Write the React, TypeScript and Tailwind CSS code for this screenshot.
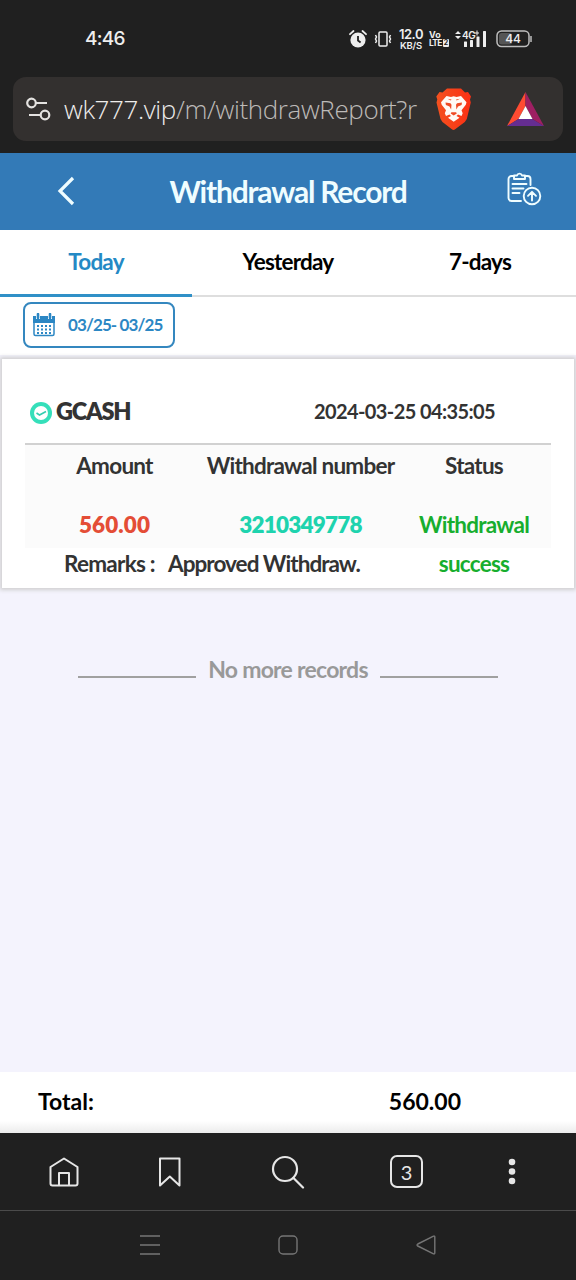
import type { ReactNode } from 'react';

/* ------------------------------------------------------------------ */
/*  Data                                                               */
/* ------------------------------------------------------------------ */

const tabs = ['Today', 'Yesterday', '7-days'];

const record = {
  method: 'GCASH',
  time: '2024-03-25 04:35:05',
  amount: '560.00',
  number: '3210349778',
  status: 'Withdrawal success',
  remarks: 'Approved Withdraw.',
};

/* ------------------------------------------------------------------ */
/*  Phone status bar                                                   */
/* ------------------------------------------------------------------ */

function StatusBar() {
  return (
    <div className="flex h-[77px] shrink-0 justify-between pl-[85px] pr-[44px] font-['Inter'] text-[#eeeeee]">
      <span className="mt-[25px] text-[19px] font-medium leading-[28px] tracking-[-0.7px]">4:46</span>
      <div className="flex h-[77px] items-center">
        <svg className="mr-[7px] h-[20px] w-[18px]" viewBox="0 0 18 20" fill="none" stroke="#eeeeee" strokeWidth="1.8">
          <circle cx="9" cy="11" r="7.6" fill="#eeeeee" stroke="none" />
          <path d="M1 5.2 4.5 2M17 5.2 13.5 2" strokeLinecap="round" />
          <path d="M9 7v4.5l2.6 2" stroke="#202020" />
        </svg>
        <svg className="mr-[6px] h-[18px] w-[18px]" viewBox="0 0 18 18" fill="none" stroke="#eeeeee" strokeWidth="1.5">
          <rect x="5" y="2" width="8" height="14" rx="1" />
          <path d="M1.500 5 2.500 7l-1 2 1 2-1 2M16.500 5l-1 2 1 2-1 2 1 2" />
        </svg>
        <div className="mr-[5px] w-[26px] text-center font-semibold">
          <div className="whitespace-nowrap text-[13px] leading-[13px] tracking-[-0.5px]">12.0</div>
          <div className="whitespace-nowrap text-[9.5px] leading-[9px] tracking-[-0.2px]">KB/S</div>
        </div>
        <div className="w-[25px] font-bold">
          <div className="text-[9px] leading-[9px]">Vo</div>
          <div className="flex items-center text-[8.5px] leading-[9px] tracking-[-0.7px]">
            LTE
            <span className="ml-[1px] rounded-[1px] bg-[#eeeeee] px-[1px] text-[7px] leading-[8px] tracking-normal text-[#202020]">2</span>
          </div>
        </div>
        <svg className="mr-[8px] h-[20px] w-[34px]" viewBox="0 0 34 20" fill="#eeeeee">
          <path d="m1 5 3-3 3 3zM1 7h6l-3 3z" />
          <text x="8" y="9.500" fontFamily="Inter" fontSize="10" fontWeight="600" letterSpacing="-0.500">4G</text>
          <path d="M21 3.500h1.500v-2h1v2H25v1h-1.500v2h-1v-2H21z" />
          <rect x="10" y="12.500" width="3" height="5.500" rx="0.500" />
          <rect x="16" y="11" width="3" height="7" rx="0.500" />
          <rect x="22.500" y="7.500" width="3" height="10.500" rx="0.500" />
          <rect x="29" y="2" width="3" height="16" rx="0.500" />
        </svg>
        <svg className="h-[18px] w-[36px]" viewBox="0 0 36 18">
          <rect x="1" y="1" width="32" height="15.500" rx="4.500" fill="none" stroke="#bdbdbd" strokeWidth="1.500" />
          <rect x="3" y="3" width="13" height="11.500" rx="2.500" fill="#555555" />
          <path d="M35 6v6" stroke="#bdbdbd" strokeWidth="1.500" />
          <text x="17" y="13.200" fontFamily="Inter" fontSize="12" fontWeight="500" textAnchor="middle" fill="#eeeeee">44</text>
        </svg>
      </div>
    </div>
  );
}

/* ------------------------------------------------------------------ */
/*  Browser address bar                                                */
/* ------------------------------------------------------------------ */

function LionShield() {
  return (
    <svg className="ml-[11px] h-[42px] w-[36px]" viewBox="0 0 36 42">
      <defs>
        <linearGradient id="shield" x1="0" x2="1">
          <stop offset="0" stopColor="#f4511f" />
          <stop offset="1" stopColor="#fb3014" />
        </linearGradient>
      </defs>
      <path d="M11 .5h14l4 4 3-.5 3 4.500-1 3 .8 3-4 16.500-2 3-10 7.500-1.300.5-1.300-.5-9.700-7.500-2-3L.5 14.500l.8-3-1-3L3.500 4l3 .5z" fill="url(#shield)" />
      <path d="m10.500 8 4.500 1 2.700-.7 2.800.7 4.500-1 5.500 6.300-.7 2.500-4.300 5.500 1.200 3-1.200 2.700-3.500-1.500-1.500 1.500 3 1.800-5.800 4-5.700-4 3-1.800-1.500-1.500L10 28l-1.200-2.700 1.200-3-4.300-5.500-.7-2.500z" fill="#fffaf5" />
      <path d="m9.500 14.500 5 .7 1 1.500-.4 4.800-1.600-3-3.600-1.500zM26 14.500l-5 .7-1 1.500.4 4.800 1.600-3 3.600-1.500zM17.700 27.500l-3-2 .7-1.300h4.700l.7 1.300zM11.500 10.800l4 .7-.6 1zM24 10.800l-4 .7.6 1z" fill="#ee4b25" />
    </svg>
  );
}

function AddressBar() {
  return (
    <div className="h-[76px] shrink-0 px-[13px]">
      <div className="flex h-[64px] items-center rounded-[13px] bg-[#33302f] pl-[13px] pr-[19px]">
        <svg className="h-[26px] w-[26px]" viewBox="0 0 26 26" fill="none" stroke="#e4e2e0" strokeWidth="2.200">
          <circle cx="5.500" cy="7" r="4.300" />
          <path d="M10 7h11M3 19h11" />
          <circle cx="19" cy="19" r="4.300" />
        </svg>
        <span className="ml-[12px] w-[361px] whitespace-nowrap font-['Open_Sans'] text-[26px] font-light leading-[32px] tracking-[-0.38px] text-[#bdbab8]">
          <span className="text-[#eeeceb]">wk777.vip</span>/m/withdrawReport?r
        </span>
        <LionShield />
        <svg className="ml-auto h-[34px] w-[37px]" viewBox="0 0 37 34">
          <path d="M18.500 0 0 34l11.500-7 7-13z" fill="#ff4b32" />
          <path d="M0 34h37l-11.500-7h-14z" fill="#652d91" />
          <path d="M18.500 0v14l7 13L37 34z" fill="#9e1f63" />
          <path d="m18.500 14-7 13h14z" fill="#ffffff" />
        </svg>
      </div>
    </div>
  );
}

/* ------------------------------------------------------------------ */
/*  Page header, tabs and date filter                                  */
/* ------------------------------------------------------------------ */

function Header() {
  return (
    <header className="flex h-[77px] shrink-0 items-center bg-[#337ab7] pl-[57px] pr-[34px] text-[#effdff]">
      <svg className="mb-[2px] h-[30px] w-[18px]" viewBox="0 0 18 30" fill="none" stroke="currentColor" strokeWidth="3.200">
        <path d="M16 2 3 15l13 13" />
      </svg>
      <h1 className="flex-1 whitespace-nowrap pb-[2px] pr-[5px] text-center text-[30px] font-bold leading-[40px] tracking-[-1.2px]">Withdrawal Record</h1>
      <svg className="mb-[6px] h-[36px] w-[36px]" viewBox="0 0 36 36" fill="none" stroke="currentColor" strokeWidth="1.900" strokeLinecap="round" strokeLinejoin="round">
        <path d="M8 5H5.500a3 3 0 0 0-3 3v19a3 3 0 0 0 3 3H15M19 5h2.500a3 3 0 0 1 3 3v6" />
        <path d="M8 8V4.500h3a2.600 2.600 0 0 1 5 0h3V8zM6.500 13h14M6.500 17.500h11M6.500 22h7" />
        <circle cx="26" cy="25" r="8.300" />
        <path d="M26 29.500V21m-4 3.800 4-4 4 4" />
      </svg>
    </header>
  );
}

function Tabs() {
  return (
    <div className="flex h-[67px] shrink-0 bg-white">
      {tabs.map((tab, i) => (
        <div
          key={tab}
          className={
            i === 0
              ? 'flex flex-1 justify-center border-b-[3px] border-[#3090c7] pt-[17px] text-[22.5px] font-bold leading-[30px] tracking-[-0.8px] text-[#2489c5]'
              : 'flex flex-1 justify-center border-b-2 border-[#dedede] pt-[17px] text-[22.5px] font-bold leading-[30px] tracking-[-0.8px] text-black'
          }
        >
          {tab}
        </div>
      ))}
    </div>
  );
}

function DateFilter() {
  return (
    <div className="h-[58px] shrink-0 bg-white pl-[23px] pt-[5px]">
      <div className="flex h-[46px] w-[152px] items-center rounded-[8px] border-2 border-[#3487bf] pl-[8px] text-[#2c87c4]">
        <svg className="h-[24px] w-[22px]" viewBox="0 0 22 24" fill="none" stroke="currentColor">
          <path d="M1 9v12a1.500 1.500 0 0 0 1.500 1.500h17A1.500 1.500 0 0 0 21 21V9" strokeWidth="1.500" />
          <path d="M0 3h3v3h4V3h8v3h4V3h3v7H0z" fill="currentColor" stroke="none" />
          <path d="M5 1v4M17 1v4" strokeWidth="2.600" strokeLinecap="round" />
          <path d="M4 13h14M4 16.500h14M4 20h14" strokeWidth="2" strokeDasharray="2 2" />
        </svg>
        <span className="ml-[13px] whitespace-nowrap text-[17px] font-bold leading-[24px] tracking-[-0.9px]">03/25- 03/25</span>
      </div>
    </div>
  );
}

/* ------------------------------------------------------------------ */
/*  Record card                                                        */
/* ------------------------------------------------------------------ */

function Column({ label, className, children }: { label: string; className: string; children: ReactNode }) {
  return (
    <div className={`flex flex-col items-center pt-px ${className}`}>
      <span className="h-[39px] whitespace-nowrap">{label}</span>
      {children}
    </div>
  );
}

function RecordCard() {
  return (
    <section className="mx-[2px] mt-[4px] h-[229px] shrink-0 bg-white px-[23px] text-[22.5px] font-bold leading-[39px] tracking-[-0.75px] text-[#333333] shadow-[0_0_4px_2px_#cfcfcf]">
      <div className="flex h-[86px] items-center border-b-2 border-[#d1d1d1] pl-[4px] pr-[56px] pt-[20px]">
        <svg className="mt-[3px] h-[24px] w-[24px]" viewBox="0 0 24 24">
          <circle cx="12" cy="12" r="11" fill="#35dfba" />
          <circle cx="12" cy="12" r="7" fill="#ffffff" />
          <path d="m7.500 12 3 2 6.500-3.500" fill="none" stroke="#35cdb0" strokeWidth="1.600" />
        </svg>
        <span className="ml-[3px] text-[23.5px] font-extrabold tracking-[-1.2px]">{record.method}</span>
        <span className="ml-auto whitespace-nowrap pt-px text-[20px] tracking-[-0.6px]">{record.time}</span>
      </div>
      <div className="flex h-[103px] bg-[#fbfbfb]">
        <Column label="Amount" className="w-[179px]">
          <span className="mt-[20px] text-[22.5px] font-extrabold tracking-[0.1px] text-[#e44d36]">{record.amount}</span>
        </Column>
        <Column label="Withdrawal number" className="w-[193px]">
          <span className="mt-[20px] text-[22.5px] font-extrabold tracking-[-0.8px] text-[#1ed3ae]">{record.number}</span>
        </Column>
        <Column label="Status" className="w-[154px]">
          <span className="mt-[20px] w-[120px] text-center text-[#17ae2e]">{record.status}</span>
        </Column>
      </div>
      <div className="flex h-[30px] w-[370px] items-center pl-[39px]">
        <span className="w-[104px] whitespace-nowrap">Remarks :</span>
        <span className="whitespace-nowrap tracking-[-0.95px]">{record.remarks}</span>
      </div>
    </section>
  );
}

/* ------------------------------------------------------------------ */
/*  Browser toolbar and system navigation                              */
/* ------------------------------------------------------------------ */

function BrowserNav() {
  return (
    <nav className="flex h-[78px] shrink-0 items-center border-b border-[#4b4b4b] pl-[48px] pr-[48px] text-[#e6e6e6]">
      <svg className="h-[32px] w-[32px]" viewBox="0 0 32 32" fill="none" stroke="currentColor" strokeWidth="2" strokeLinejoin="round">
        <path d="M2.500 11 16 2.500 29.500 11v16.500a2 2 0 0 1-2 2h-23a2 2 0 0 1-2-2z" />
        <path d="M11 29.500V17h10v12.500" />
      </svg>
      <svg className="ml-[78px] h-[32px] w-[24px]" viewBox="0 0 24 32" fill="none" stroke="currentColor" strokeWidth="2" strokeLinejoin="round">
        <path d="M2 2.500h19.500v27l-9.700-9L2 29.500z" />
      </svg>
      <svg className="ml-[89px] h-[34px] w-[34px]" viewBox="0 0 34 34" fill="none" stroke="currentColor" strokeWidth="2.200" strokeLinecap="round">
        <circle cx="14" cy="14" r="12" />
        <path d="m22.500 23 9.500 9.500" />
      </svg>
      <div className="ml-[85px] flex h-[33px] w-[33px] items-center justify-center rounded-[7px] border-2 border-current text-[20px]">3</div>
      <svg className="ml-auto h-[28px] w-[32px]" viewBox="0 0 32 28" fill="currentColor">
        <circle cx="16" cy="4" r="3.300" />
        <circle cx="16" cy="13.500" r="3.300" />
        <circle cx="16" cy="23" r="3.300" />
      </svg>
    </nav>
  );
}

function SystemNav() {
  return (
    <div className="flex h-[69px] shrink-0 items-center justify-between px-[140px] pb-[2px] text-[#757575]">
      <svg className="h-[20px] w-[20px]" viewBox="0 0 20 20" stroke="currentColor" strokeWidth="1.400">
        <path d="M0 1h20M0 10h20M0 19h20" />
      </svg>
      <svg className="h-[20px] w-[20px]" viewBox="0 0 20 20" fill="none" stroke="currentColor" strokeWidth="1.400">
        <rect x="1" y="1" width="18" height="18" rx="4" />
      </svg>
      <svg className="h-[20px] w-[20px]" viewBox="0 0 20 20" fill="none" stroke="currentColor" strokeWidth="1.400" strokeLinejoin="round">
        <path d="M17.500 1.200 1.800 9c-1 .6-1 1.500 0 2l15.700 7.800c.8.300 1.300 0 1.300-.8V2c0-.8-.5-1.100-1.300-.8z" />
      </svg>
    </div>
  );
}

/* ------------------------------------------------------------------ */
/*  Page                                                               */
/* ------------------------------------------------------------------ */

export default function App() {
  return (
    <div className="flex h-[1280px] w-[576px] flex-col overflow-hidden bg-[#202020] font-['Lato','Open_Sans',sans-serif]">
      <StatusBar />
      <AddressBar />
      <Header />
      <Tabs />
      <div className="flex min-h-0 flex-1 flex-col bg-[#f4f3fd]">
        <DateFilter />
        <RecordCard />
        <div className="mt-[62px] flex h-[40px] items-center justify-center gap-[12px] text-[23px] font-bold tracking-[-0.75px] text-[#999999]">
          <span className="mt-[13px] h-[2px] w-[118px] bg-[#a0a0a0]" />
          <span className="whitespace-nowrap pb-[2px]">No more records</span>
          <span className="mt-[13px] h-[2px] w-[118px] bg-[#a0a0a0]" />
        </div>
      </div>
      <footer className="flex h-[61px] shrink-0 items-center justify-between bg-linear-to-b from-white from-80% to-[#ececec] pb-[3px] pl-[38px] pr-[115px] text-[23px] font-bold text-black">
        <span>Total:</span>
        <span>560.00</span>
      </footer>
      <BrowserNav />
      <SystemNav />
    </div>
  );
}
